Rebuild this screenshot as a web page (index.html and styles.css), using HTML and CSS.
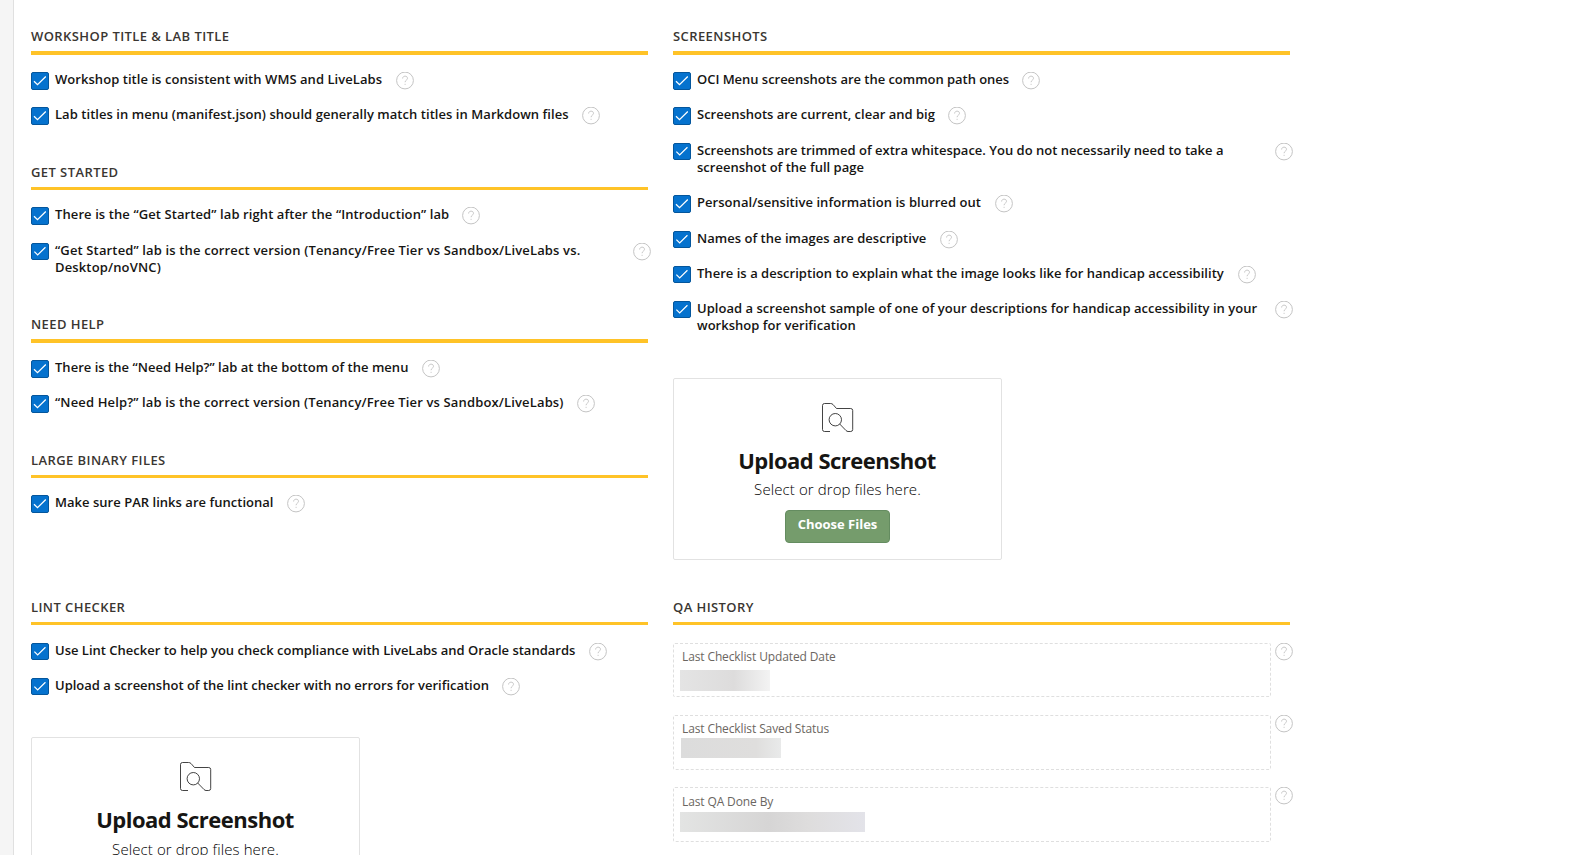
FILE: index.html
```
<!DOCTYPE html>
<html lang="en">
<head>
<meta charset="utf-8">
<title>QA Checklist</title>
<link rel="stylesheet" href="styles.css">
</head>
<body>
<svg class="defs" aria-hidden="true">
  <symbol id="check" viewBox="0 0 16 16"><path d="M2 8.200 5.500 11.700 13.800 3.500" fill="none" stroke="#fff" stroke-width="1.3"/></symbol>
  <symbol id="help" viewBox="0 0 18 18"><circle cx="9" cy="8.5" r="8.4" fill="none" stroke="#c4c4c4"/><path d="M6.6 6.5C6.6 3.4 11.5 3.4 11.5 6.3 11.5 8.2 9.1 8.1 9.1 10.2M9.1 11.8V12.9" fill="none" stroke="#c8c8c8" stroke-width="1"/></symbol>
  <symbol id="folder" viewBox="0 0 32 30"><g fill="none" stroke="#222" stroke-width=".85"><path d="M8 28.5H2.500Q.5 28.500 .5 26.500V2.500Q.5.5 2.500.5H8.500Q10 .5 11 1.500L14.500 5.500H28.700Q30.700 5.500 30.700 7.500V26.500Q30.700 28.500 28.700 28.500H26Q25 28.500 24 27.500L17.700 21"/><circle cx="13.300" cy="16.700" r="6.200"/></g></symbol>
</svg>
<div class="page">
  <div class="gutter"></div>
  <main class="columns">
    <div class="column column-left">
      <section>
        <h2>WORKSHOP TITLE &amp; LAB TITLE</h2>
        <ul>
          <li><svg class="box"><use href="#check"/></svg><label class="open" style="width:340.5px">Workshop title is consistent with WMS and LiveLabs</label><svg class="help"><use href="#help"/></svg></li>
          <li><svg class="box"><use href="#check"/></svg><label class="open" style="width:527px">Lab titles in menu (manifest.json) should generally match titles in Markdown files</label><svg class="help"><use href="#help"/></svg></li>
        </ul>
      </section>
      <section class="thin">
        <h2>GET STARTED</h2>
        <ul>
          <li class="mid"><svg class="box"><use href="#check"/></svg><label class="wide" style="width:407px">There is the “Get Started” lab right after the “Introduction” lab</label><svg class="help"><use href="#help"/></svg></li>
          <li class="short two"><svg class="box"><use href="#check"/></svg><label class="wider" style="width:578px">“Get Started” lab is the correct version (Tenancy/Free Tier vs Sandbox/LiveLabs vs.<br>Desktop/noVNC)</label><svg class="help"><use href="#help"/></svg></li>
        </ul>
      </section>
      <section>
        <h2>NEED HELP</h2>
        <ul>
          <li><svg class="box"><use href="#check"/></svg><label style="width:367px">There is the “Need Help?” lab at the bottom of the menu</label><svg class="help"><use href="#help"/></svg></li>
          <li><svg class="box"><use href="#check"/></svg><label class="wider" style="width:522px">“Need Help?” lab is the correct version (Tenancy/Free Tier vs Sandbox/LiveLabs)</label><svg class="help"><use href="#help"/></svg></li>
        </ul>
      </section>
      <section class="thin">
        <h2>LARGE BINARY FILES</h2>
        <ul>
          <li><svg class="box"><use href="#check"/></svg><label style="width:232px">Make sure PAR links are functional</label><svg class="help"><use href="#help"/></svg></li>
        </ul>
      </section>
      <section class="thin late">
        <h2>LINT CHECKER</h2>
        <ul>
          <li class="short"><svg class="box"><use href="#check"/></svg><label class="tight" style="width:534px">Use Lint Checker to help you check compliance with LiveLabs and Oracle standards</label><svg class="help"><use href="#help"/></svg></li>
          <li class="short"><svg class="box"><use href="#check"/></svg><label class="tight" style="width:447px">Upload a screenshot of the lint checker with no errors for verification</label><svg class="help"><use href="#help"/></svg></li>
        </ul>
        <div class="upload lint-upload">
          <svg class="folder"><use href="#folder"/></svg>
          <h3>Upload Screenshot</h3>
          <p>Select or drop files here.</p>
        </div>
      </section>
    </div>
    <div class="column column-right">
      <section>
        <h2>SCREENSHOTS</h2>
        <ul>
          <li><svg class="box"><use href="#check"/></svg><label class="tighter" style="width:325px">OCI Menu screenshots are the common path ones</label><svg class="help"><use href="#help"/></svg></li>
          <li class="mid"><svg class="box"><use href="#check"/></svg><label class="tight" style="width:250.5px">Screenshots are current, clear and big</label><svg class="help"><use href="#help"/></svg></li>
          <li class="short two"><svg class="box"><use href="#check"/></svg><label class="tight" style="width:578px">Screenshots are trimmed of extra whitespace. You do not necessarily need to take a<br>screenshot of the full page</label><svg class="help"><use href="#help"/></svg></li>
          <li class="mid"><svg class="box"><use href="#check"/></svg><label class="open" style="width:298px">Personal/sensitive information is blurred out</label><svg class="help"><use href="#help"/></svg></li>
          <li class="short"><svg class="box"><use href="#check"/></svg><label style="width:242.5px">Names of the images are descriptive</label><svg class="help"><use href="#help"/></svg></li>
          <li class="short"><svg class="box"><use href="#check"/></svg><label style="width:541px">There is a description to explain what the image looks like for handicap accessibility</label><svg class="help"><use href="#help"/></svg></li>
          <li class="short two"><svg class="box"><use href="#check"/></svg><label style="width:578px">Upload a screenshot sample of one of your descriptions for handicap accessibility in your<br>workshop for verification</label><svg class="help"><use href="#help"/></svg></li>
        </ul>
        <div class="upload">
          <svg class="folder"><use href="#folder"/></svg>
          <h3>Upload Screenshot</h3>
          <p>Select or drop files here.</p>
          <button type="button">Choose Files</button>
        </div>
      </section>
      <section class="thin late">
        <h2>QA HISTORY</h2>
        <div class="fields">
          <div class="field"><div class="field-box first"><span>Last Checklist Updated Date</span><i class="redacted date"></i></div><svg class="help"><use href="#help"/></svg></div>
          <div class="field"><div class="field-box"><span>Last Checklist Saved Status</span><i class="redacted status"></i></div><svg class="help"><use href="#help"/></svg></div>
          <div class="field"><div class="field-box last"><span>Last QA Done By</span><i class="redacted person"></i></div><svg class="help"><use href="#help"/></svg></div>
        </div>
      </section>
    </div>
  </main>
</div>
</body>
</html>
```
FILE: styles.css
```
* { box-sizing: border-box; }
body { margin: 0; background: #fff; font-family: "Open Sans", "Noto Sans", sans-serif; color: #161513; }
.defs { display: none; }
.page { display: flex; height: 855px; overflow: hidden; }
.gutter { flex: none; width: 14px; background: #f5f5f5; border-right: 1px solid #e0e0e0; }
.columns { display: grid; grid-template-columns: 617px 617px; column-gap: 25px; padding: 26px 0 0 17px; }
.column { display: grid; grid-template-columns: 617px; align-content: start; }
.column-left { grid-template-rows: 136px 152px 136px 147px 400px; }
.column-right { grid-template-rows: 571px 400px; }

h2 { margin: 0; padding-bottom: 5px; border-bottom: 4px solid #ffc328; font-size: 13px; line-height: 20px; font-weight: 600; letter-spacing: .42px; color: #3a3632; white-space: nowrap; }
.thin h2 { border-bottom-width: 3px; }
ul { list-style: none; margin: 17px 0 0; padding: 0; }
.late ul { margin-top: 18px; }
li { display: flex; align-items: flex-start; height: 35px; }
li.mid { height: 36px; }
li.two { height: 52px; }
.box { flex: none; width: 18px; height: 18px; background: #0572ce; border: 1px solid #04569c; border-radius: 2px; }
.short .box { height: 17px; }
label { flex: none; margin: -1px 0 0 6px; font-size: 13px; line-height: 17px; font-weight: 600; letter-spacing: .025px; white-space: nowrap; }
.open { letter-spacing: .05px; }
.wide { letter-spacing: .095px; }
.wider { letter-spacing: .145px; }
.tight { letter-spacing: 0; }
.tighter { letter-spacing: -.035px; }
.help { flex: none; width: 18px; height: 18px; }

.upload { display: flex; flex-direction: column; align-items: center; width: 329px; height: 182px; margin-top: 25px; padding-top: 24px; border: 1px solid #e2e2e2; border-radius: 2px; }
.lint-upload { margin-top: 24px; }
.folder { width: 32px; height: 30px; margin-left: 1px; }
h3 { margin: 12px 1px 0 0; font-size: 22px; line-height: 30px; font-weight: 700; letter-spacing: -.5px; }
.upload p { margin: 4px 0 0; font-size: 15px; line-height: 20px; font-weight: 300; letter-spacing: .1px; color: #000; }
.lint-upload p { margin-top: 5px; }
button { width: 105px; height: 33px; margin-top: 11px; padding: 0 0 5px; border: 1px solid #648c60; border-radius: 4px; background: #759c6c; color: #fff; font: 700 13px/17px "Open Sans", sans-serif; }

.fields { display: grid; row-gap: 17px; margin-top: 18px; }
.field { display: flex; column-gap: 4px; }
.field:first-child { margin-bottom: 1px; }
.field-box { width: 598px; height: 55px; padding: 5px 8px; border: 1px dashed #dfdfdf; border-radius: 2px; }
.first { height: 54px; }
.last { padding-top: 6px; }
.field-box span { display: block; font-size: 12px; line-height: 16px; letter-spacing: -.12px; color: #6b6661; }
.redacted { display: block; height: 20px; }
.date { width: 90px; height: 21px; margin: 5px 0 0 -2px; background: linear-gradient(90deg, #e4e4e4, #dddcdc 60%, #f3f3f3); }
.status { width: 100px; margin: 1px 0 0 -1px; background: linear-gradient(90deg, #dcdcdc, #dfdedd 75%, #e9eaea); }
.person { width: 185px; margin: 2px 0 0 -2px; background: linear-gradient(90deg, #e3e4e3, #d6d5d5 48%, #dedddd 70%, #e3e3e9); }
```
